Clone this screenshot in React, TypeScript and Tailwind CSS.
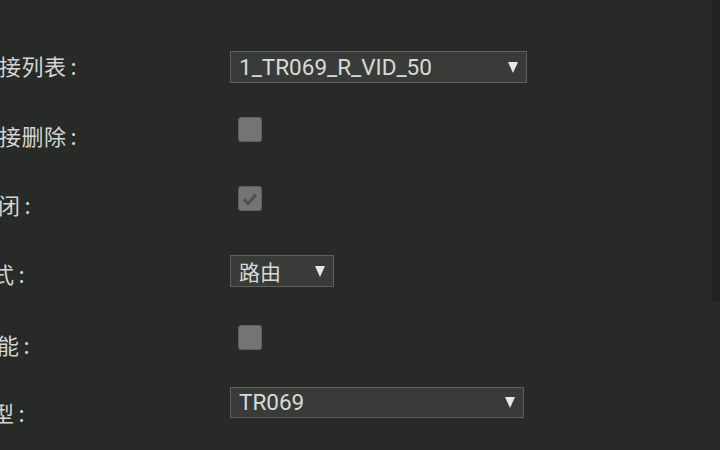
import React from "react";

const cjk = { fontFamily: '"Noto Sans CJK SC", "Noto Sans", sans-serif' };
const latin = { fontFamily: 'Roboto, "Noto Sans CJK SC", sans-serif' };

function Arrow() {
  return (
    <svg width="10" height="11" viewBox="0 0 10 11" className="shrink-0">
      <polygon points="0,0 10,0 5,11" fill="#e6e8e6" />
    </svg>
  );
}

function Select({ text, w, h = "h-[32px]", cjkText = false }: { text: string; w: string; h?: string; cjkText?: boolean }) {
  return (
    <div
      className={`${w} ${h} flex items-center justify-between border-[1.5px] border-[#5d5f5d] bg-[#393b39] pl-[8px] pr-[8px] ${cjkText ? "text-[21px]" : "text-[22.5px]"} leading-none text-[#d8dad8]`}
      style={cjkText ? cjk : latin}
    >
      <span>{text}</span>
      <Arrow />
    </div>
  );
}

function Checkbox({ checked = false }: { checked?: boolean }) {
  return (
    <div className="ml-[8px] flex h-[25px] w-[24px] items-center justify-center rounded-[3px] border border-[#5e605e] bg-[#737573]">
      {checked && (
        <svg width="16" height="14" viewBox="0 0 16 14">
          <path d="M2 7.5 L6 11.5 L14 2.5" stroke="#4f514f" strokeWidth="3.2" fill="none" />
        </svg>
      )}
    </div>
  );
}

function Label({ text, ml }: { text: string; ml: string }) {
  return (
    <div className={`h-[32px] whitespace-nowrap text-[22px] leading-[32px] tracking-[0.5px] text-[#d4d6d4] ${ml}`} style={cjk}>
      {text}
      <span className="ml-[4px]">:</span>
    </div>
  );
}

export default function App() {
  return (
    <div className="relative h-[450px] w-[720px] overflow-hidden bg-[#282a28]">
      <div className="absolute right-0 top-0 h-[302px] w-[8px] bg-[#202220]" />
      <div className="flex flex-col pt-[32px]">
        <div className="flex h-[69px]">
          <div className="w-[230px] overflow-hidden pt-[17px]">
            <Label text="接列表" ml="ml-[-1px]" />
          </div>
          <div className="pt-[19px]">
            <Select text="1_TR069_R_VID_50" w="w-[297px]" />
          </div>
        </div>
        <div className="flex h-[69px]">
          <div className="w-[230px] overflow-hidden pt-[18px]">
            <Label text="接删除" ml="ml-[-1px]" />
          </div>
          <div className="pt-[16px]">
            <Checkbox />
          </div>
        </div>
        <div className="flex h-[69px]">
          <div className="w-[230px] overflow-hidden pt-[18px]">
            <Label text="闭" ml="ml-[-2px]" />
          </div>
          <div className="pt-[16px]">
            <Checkbox checked />
          </div>
        </div>
        <div className="flex h-[69px]">
          <div className="w-[230px] overflow-hidden pt-[18px]">
            <Label text="式" ml="ml-[-8px]" />
          </div>
          <div className="pt-[16px]">
            <Select text="路由" w="w-[104px]" cjkText />
          </div>
        </div>
        <div className="flex h-[69px]">
          <div className="w-[230px] overflow-hidden pt-[20px]">
            <Label text="能" ml="ml-[-3px]" />
          </div>
          <div className="pt-[17px]">
            <Checkbox />
          </div>
        </div>
        <div className="flex h-[69px]">
          <div className="w-[230px] overflow-hidden pt-[19px]">
            <Label text="型" ml="ml-[-8px]" />
          </div>
          <div className="pt-[10px]">
            <Select text="TR069" w="w-[294px]" h="h-[31px]" />
          </div>
        </div>
      </div>
    </div>
  );
}
